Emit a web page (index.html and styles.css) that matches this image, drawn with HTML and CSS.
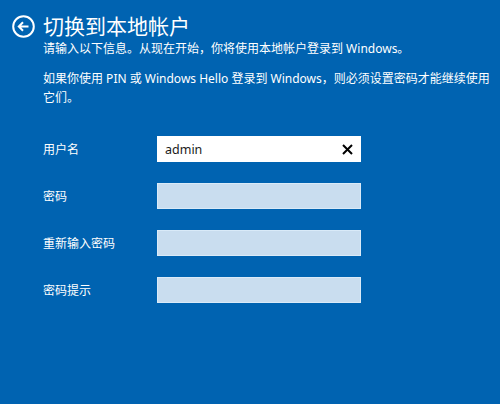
FILE: index.html
```html
<!DOCTYPE html>
<html lang="zh-CN">
<head>
<meta charset="utf-8">
<title>切换到本地帐户</title>
<link rel="stylesheet" href="styles.css">
</head>
<body>
<div class="page">
  <header class="header">
    <span class="back" aria-label="返回">
      <svg width="23" height="23" viewBox="0 0 23 23">
        <circle cx="11.5" cy="11.5" r="10.3" fill="none" stroke="#fff" stroke-width="2"/>
        <path d="M16.5 11.5H7M11 7.3L6.8 11.5 11 15.7" fill="none" stroke="#fff" stroke-width="2" stroke-linecap="butt" stroke-linejoin="miter"/>
      </svg>
    </span>
    <h1 class="title">切换到本地帐户</h1>
  </header>
  <div class="content">
    <p class="text">请输入以下信息。从现在开始，你将使用本地帐户登录到 Windows。</p>
    <p class="text second">如果你使用 PIN 或 Windows Hello 登录到 Windows，则必须设置密码才能继续使用它们。</p>
    <div class="form">
      <label class="label">用户名</label>
      <div class="field active">
        <span class="value">admin</span>
        <svg class="clear" width="11" height="11" viewBox="0 0 11 11">
          <path d="M1 1L10 10M10 1L1 10" stroke="#000" stroke-width="2"/>
        </svg>
      </div>
      <label class="label">密码</label>
      <div class="field"></div>
      <label class="label">重新输入密码</label>
      <div class="field"></div>
      <label class="label">密码提示</label>
      <div class="field"></div>
    </div>
  </div>
</div>
</body>
</html>
```
FILE: styles.css
```css
html, body {
  margin: 0;
  padding: 0;
}
body {
  background: #0063b1;
  color: #fff;
  font-family: "Segoe UI", "Noto Sans", "Noto Sans CJK SC", sans-serif;
  width: 500px;
  height: 404px;
  overflow: hidden;
}
.page {
  padding-top: 12px;
}
.header {
  display: flex;
  align-items: center;
  height: 27px;
  padding-left: 12px;
}
.back {
  display: flex;
  width: 23px;
  height: 23px;
  margin-right: 8px;
  margin-top: 1px;
}
.title {
  margin: 0;
  font-family: "Noto Sans CJK SC", sans-serif;
  font-weight: 400;
  font-size: 21px;
  line-height: 27px;
}
.content {
  padding-left: 43px;
}
.text {
  margin: 0;
  font-size: 12px;
  line-height: 19px;
  font-family: "Noto Sans", "Noto Sans CJK SC", sans-serif;
  width: 450px;
}
.second {
  margin-top: 11px;
}
.form {
  display: grid;
  grid-template-columns: 114px 204px;
  grid-auto-rows: 26px;
  row-gap: 21px;
  margin-top: 29px;
  align-items: center;
}
.label {
  font-size: 12px;
  font-family: "Noto Sans CJK SC", sans-serif;
  line-height: 26px;
}
.field {
  box-sizing: border-box;
  height: 26px;
  background: #c9ddef;
  border: 1px solid #d9eaf8;
  display: flex;
  align-items: center;
  justify-content: space-between;
}
.field.active {
  background: #fff;
  border-color: #fff;
  padding: 0 7px 0 7px;
}
.value {
  color: #1a1a1a;
  font-size: 12.5px;
  font-family: "Noto Sans", sans-serif;
}
.clear {
  display: block;
}
```
